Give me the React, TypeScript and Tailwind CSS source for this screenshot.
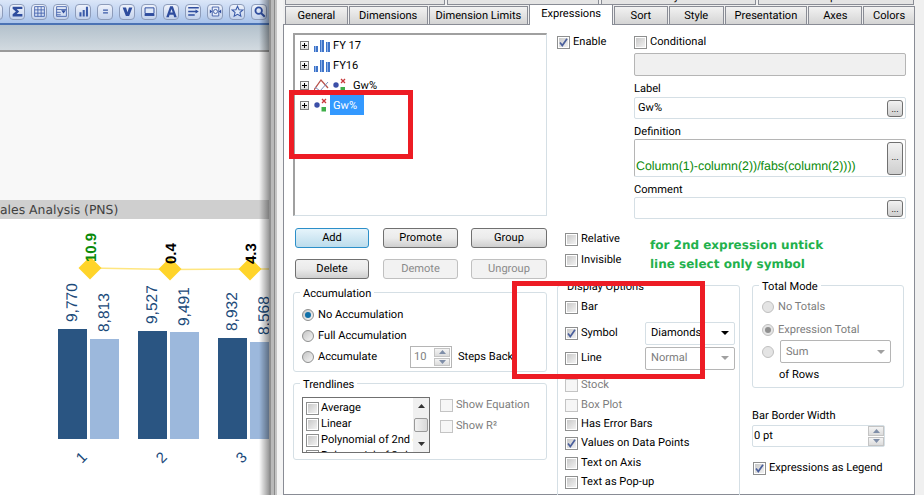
import type { ReactNode } from "react";

const toolbarIcons: ReactNode[] = [
  <path key="a" d="M3 3h8v8H3z" fill="#3a5aa8" />,
  <path key="s" d="M2 2h12v3H7l3 3-3 3h7v3H2v-2.500L6 8 2 4.500z" fill="#2f4d9e" />,
  <path key="g" d="M2 2h12v12H2zM6 2v12M10 2v12M2 6h12M2 10h12" fill="none" stroke="#3a5aa8" strokeWidth="1" />,
  <g key="c"><path d="M2 2h12v12H2zM2 5.500h12M2 9h5M2 12h5" fill="none" stroke="#3a5aa8" /><path d="M7.500 6.500h6l-3 4z" fill="#2f4d9e" /></g>,
  <path key="b" d="M3 9h2.500v5H3zM7 6h2.500v8H7zM11 2h2.500v12H11z" fill="#3a5aa8" />,
  <path key="e" d="M5 5.500h6v1.500H5zM5 9h6v1.500H5z" fill="#3a5aa8" />,
  <path key="v" d="M2 3h4.200L8 9l1.800-6H14l-4 10.500H6z" fill="#2f4d9e" />,
  <g key="m"><path d="M2.500 3.500h11v7h-11z" fill="#dfe8f7" stroke="#2f4d9e" strokeWidth="1.200" /><path d="M2 11h12v2.500H2z" fill="#2f4d9e" /></g>,
  <path key="t" d="M6.300 1.500h3.400L14.500 15h-3.200l-.9-3H5.600l-.9 3H1.500zM6.500 9.300h3L8 4.800z" fill="#2f4d9e" />,
  <path key="l" d="M1.500 2.500h13v1.800h-13zM1.500 7h9V5.500L14.500 8l-4 2.500V9h-9zM1.500 11.500h8v1.800h-8z" fill="#2f4d9e" />,
  <g key="n"><path d="M4 2.500h8v11H4z" fill="#e8eef9" stroke="#2f4d9e" /><path d="M4 8L1 5.500v5zM12 8l3-2.500v5z" fill="#2f4d9e" /><circle cx="8" cy="8" r="2.500" fill="none" stroke="#2f4d9e" /></g>,
  <path key="st" d="M8 1.500l1.900 4.300 4.600.4-3.500 3 1.100 4.600L8 11.400l-4.100 2.400L5 9.200l-3.500-3 4.600-.4z" fill="#dfe8f7" stroke="#3a5aa8" strokeWidth="1.300" />,
  <g key="q"><circle cx="7" cy="7" r="4" fill="none" stroke="#2f4d9e" strokeWidth="2.200" /><path d="M10 10L14.500 14.500" stroke="#2f4d9e" strokeWidth="2.600" /></g>,
];

function BarsIcon() {
  return (
    <svg width="16" height="16" viewBox="0 0 16 16" className="shrink-0">
      <path d="M0 9h4v6H0zM6 3h4v12H6zM12 5h4v10h-4z" fill="#3f74c8" />
      <path d="M1 9h1v6H1zM7 3h1v12H7zM13 5h1v10h-1z" fill="#8db2ea" />
    </svg>
  );
}

function SymbolIcon() {
  return (
    <svg width="13" height="14" viewBox="0 0 13 14" className="shrink-0">
      <circle cx="3" cy="7" r="2.700" fill="#3b4fa8" />
      <path d="M8 1l4 4M12 1L8 5" stroke="#c8373a" strokeWidth="1.300" />
      <path d="M7.500 9h4.500v4.500H7.500z" fill="#3fae49" />
    </svg>
  );
}

function LineIcon() {
  return (
    <svg width="15" height="14" viewBox="0 0 15 14" className="shrink-0">
      <path d="M0 12L7 2l7 8" fill="none" stroke="#b8524c" strokeWidth="1.300" />
      <path d="M1 9l5 4 8-9" fill="none" stroke="#7b8fbf" strokeWidth="1" />
      <path d="M0 13h15" stroke="#b8524c" />
    </svg>
  );
}

function Plus() {
  return (
    <span className="relative h-[9px] w-[9px] shrink-0 border border-[#7f7f7f] bg-gradient-to-b from-white to-[#dcdcdc]">
      <span className="absolute left-[1px] top-[3px] h-px w-[5px] bg-black" />
      <span className="absolute left-[3px] top-[1px] h-[5px] w-px bg-black" />
    </span>
  );
}

function Check({ checked, disabled }: { checked?: boolean; disabled?: boolean }) {
  if (disabled)
    return <span className="h-[13px] w-[13px] shrink-0 border border-[#c4c4c4] bg-[#f6f6f6]" />;
  return (
    <span className="flex h-[13px] w-[13px] shrink-0 items-center justify-center border border-[#8e8f8f] bg-white p-px">
      <span className="flex h-full w-full items-center justify-center bg-gradient-to-br from-[#c9c9c9] to-[#f2f2f2]">
        {checked && (
          <svg width="9" height="9" viewBox="0 0 9 9">
            <path d="M1 4.500l2.300 3L8 .8" fill="none" stroke="#4a5f9c" strokeWidth="1.700" />
          </svg>
        )}
      </span>
    </span>
  );
}

function CheckRow({ label, checked, disabled, className = "", children }: { label: string; checked?: boolean; disabled?: boolean; className?: string; children?: ReactNode }) {
  return (
    <div className={`flex h-[14px] items-center gap-[3px] ${disabled ? "text-[#7d7d7d]" : ""} ${className}`}>
      <Check checked={checked} disabled={disabled} />
      <span className="whitespace-nowrap">{label}</span>
      {children}
    </div>
  );
}

function Radio({ on, disabled }: { on?: boolean; disabled?: boolean }) {
  return (
    <span className={`flex h-[12px] w-[12px] shrink-0 items-center justify-center rounded-full border ${disabled ? "border-[#c0c0c0] bg-[#e4e4e4]" : "border-[#8e8f8f] bg-gradient-to-br from-[#c4c4c4] to-[#f6f6f6]"}`}>
      {on && <span className={`h-[6px] w-[6px] rounded-full ${disabled ? "bg-[#8f8f8f]" : "bg-[#0f6fa8]"}`} />}
    </span>
  );
}

function Btn({ label, width, kind = "normal" }: { label: string; width: string; kind?: "normal" | "focus" | "off" }) {
  const look =
    kind === "focus"
      ? "border-[#2c8fc9] bg-gradient-to-b from-[#e6f4fb] to-[#bcdcec]"
      : kind === "off"
        ? "border-[#c0c0c0] bg-[#f2f2f2] text-[#8a8a8a]"
        : "border-[#707070] bg-gradient-to-b from-[#f2f2f2] via-[#ebebeb] to-[#cfcfcf]";
  return <div className={`flex h-[20px] items-center justify-center rounded-[3px] border ${look} ${width}`}>{label}</div>;
}

function Group({ title, className, children }: { title: string; className: string; children: ReactNode }) {
  return (
    <div className={`relative rounded-[3px] border border-[#d5dfe5] ${className}`}>
      <span className="absolute -top-[6px] left-[6px] bg-white px-[3px] leading-[14px] text-black">{title}</span>
      {children}
    </div>
  );
}

function Dots({ tall }: { tall?: boolean }) {
  return (
    <div className={`flex w-[16px] justify-center rounded-[3px] border border-[#707070] bg-gradient-to-b from-[#f2f2f2] to-[#cfcfcf] text-[9px] leading-[11px] ${tall ? "h-[33px] items-center" : "h-[17px] items-end"}`}>
      ...
    </div>
  );
}

function Combo({ label, disabled, className }: { label: string; disabled?: boolean; className: string }) {
  return (
    <div className={`flex h-[23px] shrink-0 items-center justify-between rounded-[2px] border pl-[5px] pr-[5px] ${disabled ? "border-[#b5b5b5] text-[#7d7d7d]" : "border-[#d5dfe5] text-black"} ${className}`}>
      <span>{label}</span>
      <svg width="8" height="4" viewBox="0 0 8 4">
        <path d="M0 0h8L4 4z" fill={disabled ? "#a0a0a0" : "#000"} />
      </svg>
    </div>
  );
}

function Spin({ className }: { className: string }) {
  return (
    <div className={`flex shrink-0 flex-col gap-px ${className}`}>
      {["M0 4h7L3.500 0z", "M0 0h7L3.500 4z"].map((d) => (
        <span key={d} className="flex flex-1 items-center justify-center border border-[#c4c4c4] bg-gradient-to-b from-[#f4f4f4] to-[#dcdcdc]">
          <svg width="7" height="4" viewBox="0 0 7 4">
            <path d={d} fill="#7f8ea8" />
          </svg>
        </span>
      ))}
    </div>
  );
}

function Tab({ label, width, active }: { label: string; width: string; active?: boolean }) {
  if (active)
    return (
      <div className={`relative z-10 -mb-px flex h-[21px] items-start justify-center border border-b-0 border-[#898c95] bg-white ${width}`}>
        {label}
      </div>
    );
  return (
    <div className={`flex h-[18px] items-center justify-center border border-b-0 border-[#898c95] bg-gradient-to-b from-[#f2f2f2] to-[#d4d4d4] ${width}`}>
      {label}
    </div>
  );
}

function ChartPane() {
  const bars = [
    [58, 329, "#2a5582", "9,770", 322, 72],
    [90, 339, "#9cb8dc", "8,813", 332, 104],
    [138, 331, "#2a5582", "9,527", 324, 152],
    [170, 332, "#9cb8dc", "9,491", 326, 184],
    [218, 338, "#2a5582", "8,932", 331, 232],
    [250, 342, "#9cb8dc", "8,568", 335, 264],
  ] as const;
  const points = [
    [90, 268, "10.9", "#0a8a0a", 262],
    [170, 269, "0.4", "#000", 264],
    [250, 269, "4.3", "#000", 264],
  ] as const;
  return (
    <svg width="269" height="276" viewBox="0 219 269 276" className="block">
      <path d="M90 268L170 269.500L250 269L270 269" fill="none" stroke="#ffe680" strokeWidth="1.500" />
      {bars.map(([x, y, fill, label, ty, tx]) => (
        <g key={label}>
          <rect x={x} y={y} width="29" height={439 - y} fill={fill} />
          <text transform={`rotate(-90 ${tx + 5} ${ty})`} x={tx + 5} y={ty} fontSize="15.500" fill="#1b4a7a" fontFamily="Liberation Sans">
            {label}
          </text>
        </g>
      ))}
      {points.map(([x, y, label, color, ty]) => (
        <g key={label}>
          <path d={`M${x - 11.500} ${y}L${x} ${y - 11.500}L${x + 11.500} ${y}L${x} ${y + 11.500}z`} fill="#ffd42a" />
          <text transform={`rotate(-90 ${x + 6} ${ty})`} x={x + 6} y={ty} fontSize="15" fontWeight="700" fill={color} fontFamily="Liberation Sans">
            {label}
          </text>
        </g>
      ))}
      {["1", "2", "3"].map((n, i) => (
        <text key={n} transform={`rotate(-45 ${85 + i * 80} ${461})`} x={85 + i * 80} y={461} fontSize="15" textAnchor="middle" fill="#1b4a7a" fontFamily="Liberation Sans">
          {n}
        </text>
      ))}
    </svg>
  );
}

export default function App() {
  return (
    <div className="relative flex h-[495px] w-[924px] overflow-hidden bg-[#f0f0f0] font-['Roboto',sans-serif] text-[11.1px] leading-[18px] text-black [text-rendering:geometricPrecision]">
      {/* chart window behind the dialog */}
      <div className="relative h-full w-[269px] shrink-0 overflow-hidden bg-white">
        <div className="flex h-[25px] items-center border-b-2 border-[#4a72b4] bg-gradient-to-b from-[#dbe6f8] to-[#a9c3ea]">
          <div className="-ml-[13px] flex gap-[6px]">
            {toolbarIcons.map((icon, i) => (
              <span key={i} className="flex h-[16px] w-[16px] shrink-0 items-center justify-center rounded-[4px] border border-[#8d9cba] bg-gradient-to-b from-[#eef2fb] to-[#c3d2ec]">
                <svg width="13" height="13" viewBox="0 0 16 16">
                  {icon}
                </svg>
              </span>
            ))}
          </div>
        </div>
        <div className="h-[27px] border-b-2 border-[#9a9a9a] bg-gradient-to-b from-[#b3c1cc] to-[#d2dae0]" />
        <div className="h-[148px] bg-[#f8f8f8]" />
        <div className="flex h-[19px] items-center whitespace-nowrap bg-[#cfcfcf] font-['DejaVu_Sans',sans-serif] text-[12.4px] text-[#3f3f3f]">
          ales Analysis (PNS)
        </div>
        <ChartPane />
        <div className="absolute right-0 top-0 h-full w-[10px] bg-gradient-to-r from-transparent to-[#00000066]" />
      </div>

      {/* window edge */}
      <div className="flex h-full w-[14px] shrink-0">
        <div className="w-[2px] bg-[#8f8f8f]" />
        <div className="w-[3px] bg-[#b9b9b9]" />
        <div className="w-[1px] bg-[#8a8a8a]" />
        <div className="w-[2px] bg-[#c4c4c4]" />
        <div className="w-[6px] bg-[#f4f4f4]" />
      </div>

      {/* properties dialog */}
      <div className="flex h-full w-[632px] shrink-0 flex-col">
        <div className="flex h-[5px] gap-[2px] overflow-hidden pl-[2px]">
          {[["Number", "w-[160px]"], ["Font", "w-[152px]"], ["Layout", "w-[155px]"], ["Caption", "w-[156px]"]].map(([label, w]) => (
            <div key={label} className={`flex h-[5px] shrink-0 justify-center border-x border-b border-[#898c95] bg-[#e4e4e4] leading-[14px] ${w}`}>
              <span className="-mt-[10px]">{label}</span>
            </div>
          ))}
        </div>
        <div className="flex h-[19px] items-end gap-[1px] pl-[2px]">
          <Tab label="General" width="w-[63px]" />
          <Tab label="Dimensions" width="w-[79px]" />
          <Tab label="Dimension Limits" width="w-[100px]" />
          <Tab label="Expressions" width="w-[84px]" active />
          <Tab label="Sort" width="w-[54px]" />
          <Tab label="Style" width="w-[55px]" />
          <Tab label="Presentation" width="w-[83px]" />
          <Tab label="Axes" width="w-[54px]" />
          <Tab label="Colors" width="w-[52px]" />
        </div>
        <div className="flex min-h-0 flex-1 border border-[#898c95] bg-white pl-[9px] pt-[8px]">
          <div className="w-[254px] shrink-0">
            <div className="h-[183px] border-2 border-b border-r border-[#a0a0a0] border-r-[#d5dfe5] border-b-[#d5dfe5]">
              {[
                ["FY 17", "bars"],
                ["FY16", "bars"],
                ["Gw%", "line"],
                ["Gw%", "sym"],
              ].map(([label, kind], i) => (
                <div key={i} className="flex h-[20px] items-center pl-[5px]">
                  <Plus />
                  <span className="ml-[5px] flex items-center">
                    {kind === "bars" && <BarsIcon />}
                    {kind === "line" && <LineIcon />}
                    {kind !== "bars" && <span className={kind === "line" ? "ml-[4px]" : ""}><SymbolIcon /></span>}
                  </span>
                  {i === 3 ? (
                    <span className="ml-[3px] flex h-[20px] w-[34px] items-center bg-[#3399ff] pl-[3px] pt-[1px] text-white">{label}</span>
                  ) : (
                    <span className={i === 2 ? "ml-[7px] mt-[1px]" : "ml-[3px] mt-[1px]"}>{label}</span>
                  )}
                </div>
              ))}
            </div>
            <div className="mt-[12px] flex pl-[2px]">
              <Btn label="Add" width="w-[74px]" kind="focus" />
              <Btn label="Promote" width="ml-[14px] w-[75px]" />
              <Btn label="Group" width="ml-[13px] w-[76px]" />
            </div>
            <div className="mt-[11px] flex pl-[2px]">
              <Btn label="Delete" width="w-[74px]" />
              <Btn label="Demote" width="ml-[14px] w-[75px]" kind="off" />
              <Btn label="Ungroup" width="ml-[13px] w-[76px]" kind="off" />
            </div>
            <Group title="Accumulation" className="mt-[13px] h-[80px] pl-[8px] pt-[15px]">
              <div className="flex h-[14px] items-center gap-[4px]"><Radio on />No Accumulation</div>
              <div className="mt-[7px] flex h-[14px] items-center gap-[4px]"><Radio />Full Accumulation</div>
              <div className="mt-[7px] flex h-[14px] items-center gap-[4px]">
                <Radio />
                <span className="w-[88px]">Accumulate</span>
                <div className="flex h-[22px] w-[42px] shrink-0 items-center justify-between border border-[#b5b5b5] pl-[3px] pr-px text-[#7d7d7d]">
                  10
                  <Spin className="h-[18px] w-[16px]" />
                </div>
                <span className="ml-[2px] whitespace-nowrap">Steps Back</span>
              </div>
            </Group>
            <Group title="Trendlines" className="mt-[11px] flex h-[77px] pl-[8px] pt-[13px]">
              <div className="flex h-[56px] w-[128px] shrink-0 overflow-hidden border border-[#707070] pl-[3px]">
                <div className="w-[107px] shrink-0 overflow-hidden whitespace-nowrap pt-[2px]">
                  {["Average", "Linear", "Polynomial of 2nd degree", "Polynomial of 3rd degree"].map((t) => (
                    <div key={t} className="flex h-[16px] items-center gap-[2px]">
                      <Check />
                      {t}
                    </div>
                  ))}
                </div>
                <div className="flex w-[16px] shrink-0 flex-col items-center justify-between bg-[#f0f0f0] py-[6px]">
                  <svg width="7" height="4" viewBox="0 0 7 4"><path d="M0 4h7L3.500 0z" fill="#333" /></svg>
                  <span className="h-[14px] w-[14px] rounded-[2px] border border-[#9a9a9a] bg-gradient-to-r from-[#f2f2f2] to-[#d8d8d8]" />
                  <svg width="7" height="4" viewBox="0 0 7 4"><path d="M0 0h7L3.500 4z" fill="#333" /></svg>
                </div>
              </div>
              <div className="ml-[10px] pt-[1px]">
                <CheckRow label="Show Equation" disabled />
                <CheckRow label="Show R²" disabled className="mt-[7px]" />
              </div>
            </Group>
          </div>

          <div className="ml-[10px] w-[349px] shrink-0">
            <div className="flex">
              <CheckRow label="Enable" checked className="mt-[2px] w-[77px]" />
              <div className="w-[272px]">
                <CheckRow label="Conditional" className="mt-[2px]" />
                <div className="mt-[4px] h-[23px] rounded-[2px] border border-[#b5b5b5] bg-[#f0f0f0]" />
                <div className="mt-[4px] h-[14px]">Label</div>
                <div className="mt-[3px] flex h-[22px] items-center justify-between rounded-[2px] border border-[#d5dfe5] pl-[3px] pr-[2px]">
                  Gw%
                  <Dots />
                </div>
                <div className="mt-[4px] h-[14px]">Definition</div>
                <div className="mt-[2px] flex h-[38px] items-center justify-between overflow-hidden rounded-[2px] border border-[#b5b5b5] border-b-[#d5dfe5] pr-[2px]">
                  <span className="mt-[16px] whitespace-nowrap pl-[1px] font-['Liberation_Sans',sans-serif] text-[12.4px] text-[#0a8a0a]">Column(1)-column(2))/fabs(column(2))))</span>
                  <Dots tall />
                </div>
                <div className="mt-[4px] h-[14px]">Comment</div>
                <div className="mt-[2px] flex h-[22px] items-center justify-end rounded-[2px] border border-[#d5dfe5] pr-[2px]">
                  <Dots />
                </div>
              </div>
            </div>
            <CheckRow label="Relative" className="mt-[13px] ml-[8px]" />
            <CheckRow label="Invisible" className="mt-[7px] ml-[8px]" />
            <div className="mt-[18px] flex">
              <Group title="Display Options" className="h-[240px] w-[183px] shrink-0 pl-[7px] pt-[14px]">
                <CheckRow label="Bar" />
                <CheckRow label="Symbol" checked className="mt-[12px]">
                  <Combo label="Diamonds" className="ml-auto mr-[4px] w-[90px]" />
                </CheckRow>
                <CheckRow label="Line" className="mt-[11px]">
                  <Combo label="Normal" disabled className="ml-auto mr-[4px] w-[90px]" />
                </CheckRow>
                <CheckRow label="Stock" disabled className="mt-[13px]" />
                <CheckRow label="Box Plot" disabled className="mt-[6px]" />
                <CheckRow label="Has Error Bars" className="mt-[5px]" />
                <CheckRow label="Values on Data Points" checked className="mt-[5px]" />
                <CheckRow label="Text on Axis" className="mt-[6px]" />
                <CheckRow label="Text as Pop-up" className="mt-[5px]" />
              </Group>
              <div className="ml-[12px] w-[152px] shrink-0">
                <Group title="Total Mode" className="h-[103px] pl-[9px] pt-[14px] text-[#7d7d7d]">
                  <div className="flex h-[14px] items-center gap-[4px]"><Radio disabled />No Totals</div>
                  <div className="mt-[9px] flex h-[14px] items-center gap-[4px]"><Radio on disabled />Expression Total</div>
                  <div className="mt-[3px] flex h-[23px] items-center gap-[6px]">
                    <Radio disabled />
                    <Combo label="Sum" disabled className="w-[111px]" />
                  </div>
                  <div className="mt-[3px] h-[14px] pl-[17px] text-black">of Rows</div>
                </Group>
                <div className="mt-[19px] h-[14px] whitespace-nowrap">Bar Border Width</div>
                <div className="mt-[4px] flex h-[22px] w-[133px] items-center justify-between rounded-[2px] border border-[#d5dfe5] pl-[1px]">
                  0 pt
                  <Spin className="h-[20px] w-[16px]" />
                </div>
                <CheckRow label="Expressions as Legend" checked className="mt-[14px] ml-[1px]" />
              </div>
            </div>
          </div>
        </div>
      </div>

      {/* annotations drawn over the screenshot */}
      <div className="absolute left-[289px] top-[90px] h-[69px] w-[124px] border-[5px] border-[#ed1c24]" />
      <div className="absolute left-[512px] top-[281px] h-[98px] w-[193px] border-[5px] border-[#ed1c24]" />
      <div className="absolute left-[650px] top-[236px] font-['DejaVu_Sans',sans-serif] text-[12px] font-bold leading-[19px] text-[#22b14c]">
        for 2nd expression untick
        <br />
        line select only symbol
      </div>
    </div>
  );
}
